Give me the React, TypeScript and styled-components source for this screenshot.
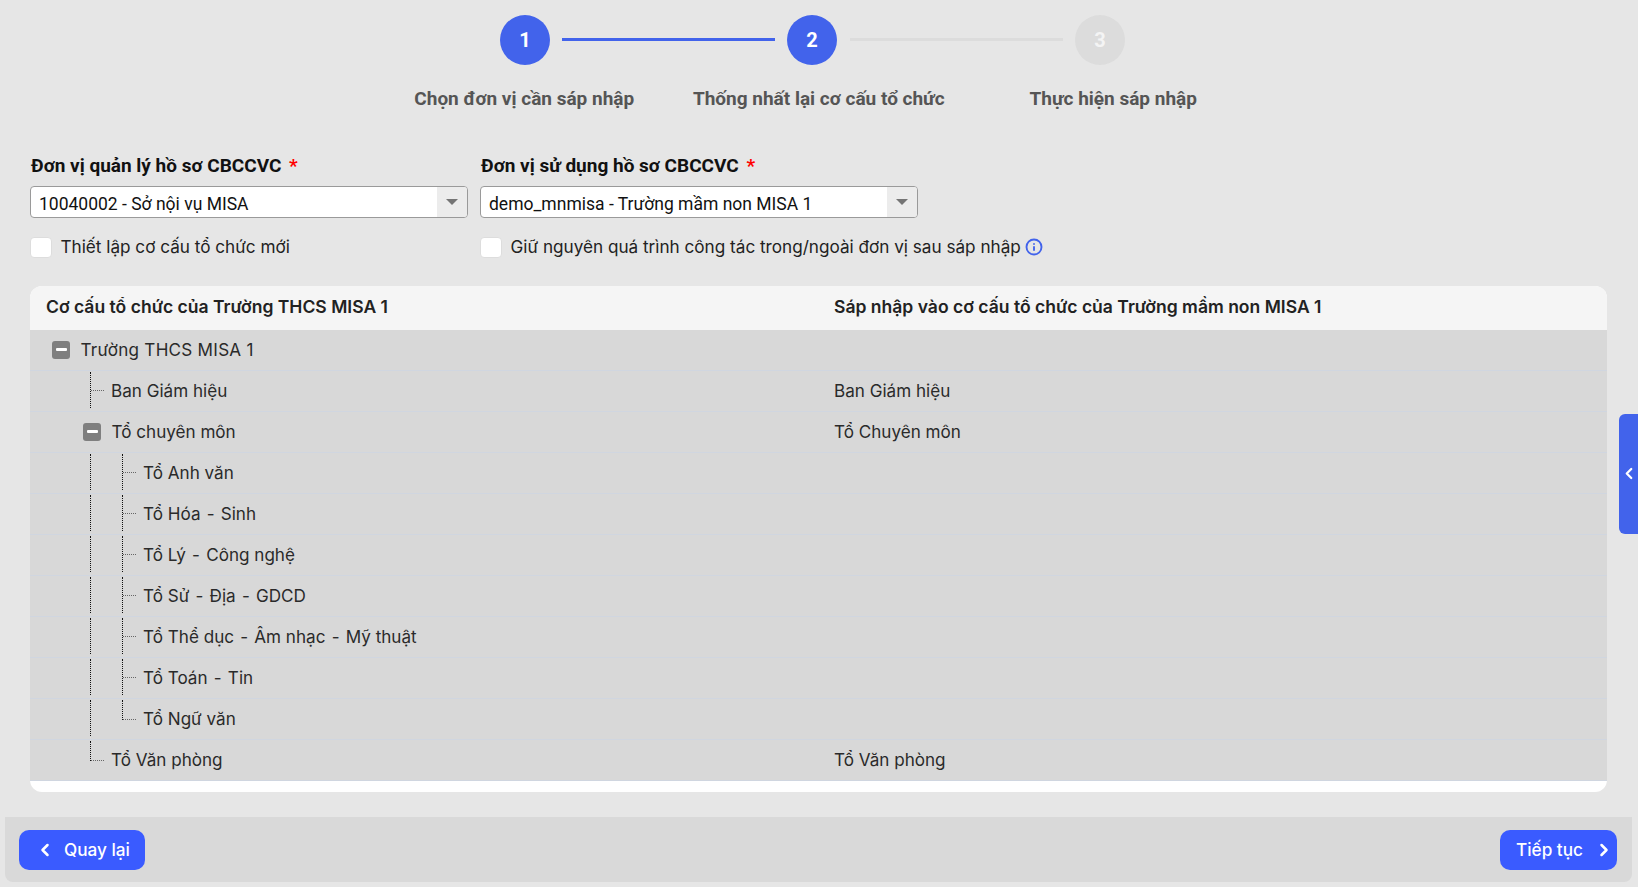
import React from "react";
import styled, { createGlobalStyle } from "styled-components";
import { ChevronLeft, ChevronRight, Info } from "lucide-react";

const GlobalStyle = createGlobalStyle`
  html, body {
    margin: 0;
    padding: 0;
    background: #e6e6e6;
    font-family: "Inter", "Liberation Sans", sans-serif;
  }
  * {
    box-sizing: border-box;
  }
`;

type TreeRow = {
  name: string;
  target?: string;
  level: number;
  toggle?: boolean;
  last?: boolean;
};

const rows: TreeRow[] = [
  { name: "Trường THCS MISA 1", level: 0, toggle: true },
  { name: "Ban Giám hiệu", target: "Ban Giám hiệu", level: 1 },
  { name: "Tổ chuyên môn", target: "Tổ Chuyên môn", level: 1, toggle: true },
  { name: "Tổ Anh văn", level: 2 },
  { name: "Tổ Hóa - Sinh", level: 2 },
  { name: "Tổ Lý - Công nghệ", level: 2 },
  { name: "Tổ Sử - Địa - GDCD", level: 2 },
  { name: "Tổ Thể dục - Âm nhạc - Mỹ thuật", level: 2 },
  { name: "Tổ Toán - Tin", level: 2 },
  { name: "Tổ Ngữ văn", level: 2, last: true },
  { name: "Tổ Văn phòng", target: "Tổ Văn phòng", level: 1, last: true },
];

const steps = [
  { label: "Chọn đơn vị cần sáp nhập", active: true },
  { label: "Thống nhất lại cơ cấu tổ chức", active: true },
  { label: "Thực hiện sáp nhập", active: false },
];

const App: React.FC = () => {
  return (
    <Page>
      <GlobalStyle />
      <Stepper>
        {steps.map((step, i) => (
          <React.Fragment key={step.label}>
            <Circle $active={step.active}>{i + 1}</Circle>
            {i < steps.length - 1 && <StepLine $active={i === 0} />}
          </React.Fragment>
        ))}
      </Stepper>
      <StepLabels>
        {steps.map((step) => (
          <StepLabel key={step.label}>{step.label}</StepLabel>
        ))}
      </StepLabels>

      <Form>
        <Field>
          <FieldLabel>
            Đơn vị quản lý hồ sơ CBCCVC <Required>*</Required>
          </FieldLabel>
          <Select>
            <SelectValue>10040002 - Sở nội vụ MISA</SelectValue>
            <SelectButton>
              <Arrow />
            </SelectButton>
          </Select>
          <CheckRow>
            <Checkbox />
            <CheckText>Thiết lập cơ cấu tổ chức mới</CheckText>
          </CheckRow>
        </Field>
        <Field>
          <FieldLabel>
            Đơn vị sử dụng hồ sơ CBCCVC <Required>*</Required>
          </FieldLabel>
          <Select>
            <SelectValue>demo_mnmisa - Trường mầm non MISA 1</SelectValue>
            <SelectButton>
              <Arrow />
            </SelectButton>
          </Select>
          <CheckRow>
            <Checkbox />
            <CheckText>Giữ nguyên quá trình công tác trong/ngoài đơn vị sau sáp nhập</CheckText>
            <InfoIcon size={18} strokeWidth={2.5} />
          </CheckRow>
        </Field>
      </Form>

      <Card>
        <HeaderRow>
          <HeaderCell>Cơ cấu tổ chức của Trường THCS MISA 1</HeaderCell>
          <HeaderCell>Sáp nhập vào cơ cấu tổ chức của Trường mầm non MISA 1</HeaderCell>
        </HeaderRow>
        {rows.map((row) => (
          <Row key={row.name}>
            <TreeCell $toggle={row.toggle} $level={row.level}>
              {row.toggle ? (
                <Toggle />
              ) : (
                <>
                  {row.level === 2 && <Guide />}
                  <Connector $last={row.last}>
                    <Dash />
                  </Connector>
                </>
              )}
              <RowText $root={row.level === 0}>
                {row.name.split(" - ").map((part, i) => (
                  <React.Fragment key={part}>
                    {i > 0 && (
                      <>
                        {" "}
                        <Sep>-</Sep>{" "}
                      </>
                    )}
                    {part}
                  </React.Fragment>
                ))}
              </RowText>
            </TreeCell>
            <TargetCell>{row.target}</TargetCell>
          </Row>
        ))}
        <CardFoot />
      </Card>

      <SideTab>
        <ChevronLeft size={21} strokeWidth={3} />
      </SideTab>

      <Footer>
        <BackButton>
          <ChevronLeft size={20} strokeWidth={3} />
          Quay lại
        </BackButton>
        <NextButton>
          Tiếp tục
          <ChevronRight size={20} strokeWidth={3} />
        </NextButton>
      </Footer>
    </Page>
  );
};

export default App;

const Page = styled.div`
  width: 1638px;
  height: 887px;
  overflow: hidden;
  position: relative;
  padding-top: 15px;
  background: #e6e6e6;
`;

const Stepper = styled.div`
  display: flex;
  align-items: center;
  margin-left: 500px;
  height: 50px;
`;

const Circle = styled.div<{ $active: boolean }>`
  flex: none;
  width: 50px;
  height: 50px;
  border-radius: 50%;
  display: flex;
  align-items: center;
  justify-content: center;
  background: ${(p) => (p.$active ? "#4263eb" : "#dcdcdc")};
  color: ${(p) => (p.$active ? "#ffffff" : "#f4f4f4")};
  font-family: "Roboto", sans-serif;
  font-weight: 700;
  font-size: 20px;
`;

const StepLine = styled.div<{ $active: boolean }>`
  width: 213px;
  height: 3px;
  margin: 0 ${(p) => (p.$active ? "12px" : "12.5px")} 2px;
  background: ${(p) => (p.$active ? "#4263eb" : "#dcdcdc")};
`;

const StepLabels = styled.div`
  display: flex;
  margin-left: 377px;
  margin-top: 22px;
`;

const StepLabel = styled.div`
  width: 294.5px;
  text-align: center;
  font-family: "Roboto", sans-serif;
  font-weight: 700;
  font-size: 19px;
  line-height: 24px;
  color: #555555;
  white-space: nowrap;
`;

const Form = styled.div`
  display: grid;
  grid-template-columns: 438px 438px;
  column-gap: 12px;
  margin: 43px 0 0 30px;
`;

const Field = styled.div`
  display: flex;
  flex-direction: column;
`;

const FieldLabel = styled.div`
  padding-left: 1px;
  font-family: "Roboto", sans-serif;
  font-weight: 700;
  font-size: 19px;
  line-height: 24px;
  color: #111111;
`;

const Required = styled.span`
  color: #ff0000;
  margin-left: 3px;
`;

const Select = styled.div`
  display: flex;
  height: 32px;
  margin-top: 8px;
  background: #ffffff;
  border: 1px solid #9a9a9a;
  border-radius: 4px;
  overflow: hidden;
`;

const SelectValue = styled.div`
  flex: 1;
  padding: 2px 0 0 8px;
  font-family: "Roboto", sans-serif;
  font-size: 17.5px;
  line-height: 30px;
  color: #111111;
`;

const SelectButton = styled.div`
  width: 30px;
  background: #ececec;
  display: flex;
  align-items: center;
  justify-content: center;
`;

const Arrow = styled.div`
  width: 0;
  height: 0;
  border-left: 6px solid transparent;
  border-right: 6px solid transparent;
  border-top: 6px solid #757575;
`;

const CheckRow = styled.div`
  display: flex;
  align-items: center;
  height: 24px;
  margin-top: 17px;
`;

const Checkbox = styled.div`
  flex: none;
  width: 22px;
  height: 21px;
  background: #ffffff;
  border: 1px solid #dddddd;
  border-radius: 4px;
  margin-right: 8.5px;
`;

const CheckText = styled.div`
  font-size: 17.15px;
  line-height: 24px;
  color: #222222;
  white-space: nowrap;
`;

const InfoIcon = styled(Info)`
  flex: none;
  color: #4263eb;
  margin-left: 4px;
`;

const Card = styled.div`
  width: 1577px;
  margin: 27px 0 0 30px;
  border-radius: 12px;
  overflow: hidden;
  background: #ffffff;
`;

const HeaderRow = styled.div`
  display: grid;
  grid-template-columns: 788px 1fr;
  height: 44px;
  padding-bottom: 4px;
  background: #f5f5f5;
  align-items: center;
`;

const HeaderCell = styled.div`
  padding-left: 16px;
  font-weight: 600;
  font-size: 17.55px;
  color: #222222;
`;

const Row = styled.div`
  display: grid;
  grid-template-columns: 789px 1fr;
  height: 41px;
  padding-bottom: 1px;
  background: #d8d8d8;
  border-bottom: 1px solid #d0d6e0;
  align-items: center;
`;

const TreeCell = styled.div<{ $toggle?: boolean; $level: number }>`
  display: flex;
  align-items: center;
  height: 100%;
  padding-left: ${(p) => (p.$toggle ? 22 + p.$level * 31 : 60)}px;
`;

const Toggle = styled.div`
  width: 18px;
  height: 18px;
  margin-right: 10.5px;
  border-radius: 3px;
  background: #7f7f7f;
  display: flex;
  align-items: center;
  justify-content: center;
  &::before {
    content: "";
    width: 11px;
    height: 3px;
    border-radius: 1px;
    background: #ffffff;
  }
`;

const Guide = styled.div`
  width: 32px;
  height: 36px;
  align-self: flex-start;
  margin-top: 1px;
  border-left: 1px dotted #111111;
`;

const Connector = styled.div<{ $last?: boolean }>`
  width: 21px;
  height: ${(p) => (p.$last ? 20 : 36)}px;
  align-self: flex-start;
  margin-top: 1px;
  border-left: 1px dotted #111111;
  display: flex;
  align-items: ${(p) => (p.$last ? "flex-end" : "center")};
`;

const Dash = styled.div`
  width: 13px;
  border-top: 1px dotted #666666;
`;

const RowText = styled.div<{ $root?: boolean }>`
  font-size: 17.1px;
  letter-spacing: ${(p) => (p.$root ? "0.25px" : "0")};
  color: #2a2a2a;
  white-space: nowrap;
`;

const Sep = styled.span`
  margin: 0 1.4px;
`;

const TargetCell = styled.div`
  padding-left: 15px;
  font-size: 17.1px;
  color: #2a2a2a;
`;

const CardFoot = styled.div`
  height: 11px;
`;

const SideTab = styled.div`
  position: absolute;
  right: 0;
  top: 414px;
  width: 19px;
  height: 120px;
  padding: 0 0 2px 1px;
  border-radius: 6px 0 0 6px;
  background: #4263eb;
  color: #ffffff;
  display: flex;
  align-items: center;
  justify-content: center;
`;

const Footer = styled.div`
  display: flex;
  align-items: center;
  justify-content: space-between;
  width: 1627px;
  height: 65px;
  margin: 25px 0 0 5px;
  padding: 0 15px 0 14px;
  background: #d9d9d9;
  border-radius: 0 0 8px 8px;
`;

const BackButton = styled.div`
  display: flex;
  align-items: center;
  gap: 9px;
  width: 126px;
  height: 40px;
  padding-left: 16px;
  border-radius: 10px;
  background: #3a5bff;
  color: #ffffff;
  font-weight: 500;
  font-size: 17.2px;
  white-space: nowrap;
`;

const NextButton = styled(BackButton)`
  width: 117px;
  gap: 11px;
`;
